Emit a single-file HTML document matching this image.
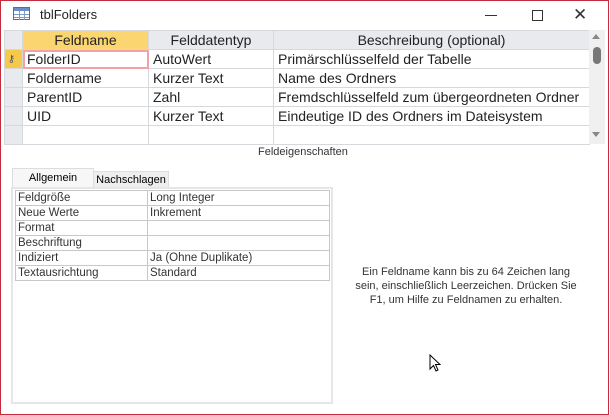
<!DOCTYPE html><html><head><style>
body{margin:0;width:610px;height:415px;background:#fff;font-family:"Liberation Sans",sans-serif;position:relative;overflow:hidden}
.a{position:absolute}
.win{left:0;top:0;width:607px;height:413px;border:1px solid #c42b3c}
table{border-collapse:collapse;position:absolute;table-layout:fixed}
.g td{height:18px;border:1px solid #d5d8dc;font-size:14px;padding:0 0 0 4px;color:#222;white-space:nowrap;overflow:hidden}
.p td{height:14px;border:1px solid #c8c8c8;font-size:11.5px;padding:0 0 0 2px;color:#333;white-space:nowrap}
</style></head><body>
<div class="a win"></div>
<svg class="a" style="left:13px;top:7px" width="18" height="14"><rect x="0.5" y="0.5" width="16" height="12" fill="#fff" stroke="#4b6fa8"/><rect x="1" y="1" width="15" height="3" fill="#6b8fc8"/><path d="M1 7.5H16M1 10.5H16M6.5 4V13M11.5 4V13" stroke="#7f9bc6"/></svg>
<div class="a" style="left:40px;top:7px;font-size:13px;color:#222">tblFolders</div>
<div class="a" style="left:485px;top:15px;width:12px;height:1px;background:#333"></div>
<div class="a" style="left:532px;top:10px;width:9px;height:9px;border:1px solid #333"></div>
<div class="a" style="left:573px;top:5px;font-size:17px;color:#333">✕</div>
<table class="g" style="left:4px;top:30px;width:585px">
<colgroup><col style="width:18px"><col style="width:126px"><col style="width:125px"><col style="width:316px"></colgroup>
<tr style="background:#e8eaee"><td style="padding:0;background:#e8eaee"></td><td style="text-align:center;background:#fbd570;padding:0">Feldname</td><td style="text-align:center;padding:0">Felddatentyp</td><td style="text-align:center;padding:0">Beschreibung (optional)</td></tr>
<tr><td style="padding:0;background:#f7c94a;font-size:10px;color:#555">&nbsp;⚷</td><td style="outline:2px solid #f4a0a8;outline-offset:-2px">FolderID</td><td>AutoWert</td><td>Primärschlüsselfeld der Tabelle</td></tr>
<tr><td style="padding:0;background:#e8eaee"></td><td>Foldername</td><td>Kurzer Text</td><td>Name des Ordners</td></tr>
<tr><td style="padding:0;background:#e8eaee"></td><td>ParentID</td><td>Zahl</td><td>Fremdschlüsselfeld zum übergeordneten Ordner</td></tr>
<tr><td style="padding:0;background:#e8eaee"></td><td>UID</td><td>Kurzer Text</td><td>Eindeutige ID des Ordners im Dateisystem</td></tr>
<tr><td style="padding:0;background:#e8eaee"></td><td></td><td></td><td></td></tr>
</table>
<div class="a" style="left:589px;top:30px;width:16px;height:114px;background:#f0f0f0"></div>
<div class="a" style="left:592px;top:34px;border:4px solid transparent;border-bottom:5px solid #888;border-top:0"></div>
<div class="a" style="left:593px;top:47px;width:8px;height:17px;border-radius:4px;background:#777"></div>
<div class="a" style="left:592px;top:132px;border:4px solid transparent;border-top:5px solid #888;border-bottom:0"></div>
<div class="a" style="left:258px;top:146px;font-size:11px;color:#333">Feldeigenschaften</div>
<div class="a" style="left:12px;top:168px;width:80px;height:20px;background:#f7f7f7;border:1px solid #ddd;border-bottom:0;font-size:11px;text-align:center;line-height:18px">Allgemein</div>
<div class="a" style="left:93px;top:171px;width:74px;height:17px;background:#eee;border:1px solid #ddd;border-bottom:0;font-size:11px;text-align:center;line-height:17px">Nachschlagen</div>
<div class="a" style="left:11px;top:187px;width:318px;height:213px;border:2px solid #e6e6e6;background:#fff"></div>
<table class="p" style="left:15px;top:190px;width:314px">
<colgroup><col style="width:132px"><col style="width:182px"></colgroup>
<tr><td>Feldgröße</td><td>Long Integer</td></tr>
<tr><td>Neue Werte</td><td>Inkrement</td></tr>
<tr><td>Format</td><td></td></tr>
<tr><td>Beschriftung</td><td></td></tr>
<tr><td>Indiziert</td><td>Ja (Ohne Duplikate)</td></tr>
<tr><td>Textausrichtung</td><td>Standard</td></tr>
</table>
<div class="a" style="left:352px;top:265px;width:228px;text-align:center;font-size:11px;line-height:14px;color:#333">Ein Feldname kann bis zu 64 Zeichen lang sein, einschließlich Leerzeichen. Drücken Sie F1, um Hilfe zu Feldnamen zu erhalten.</div>
<svg class="a" style="left:429px;top:354px" width="14" height="20"><path d="M1 1V15L4.5 11.5L7 17L9 16L6.5 10.5H11Z" fill="#fff" stroke="#000"/></svg>
</body></html>
